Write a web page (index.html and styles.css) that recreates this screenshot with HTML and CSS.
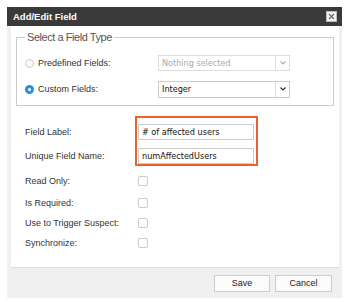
FILE: index.html
```html
<!DOCTYPE html>
<html>
<head>
<meta charset="utf-8">
<link rel="stylesheet" href="styles.css">
</head>
<body>
<div class="dialog">
  <div class="titlebar">
    <span class="title">Add/Edit Field</span>
    <span class="close"><svg width="7" height="7" viewBox="0 0 7 7"><path d="M1 1L6 6M6 1L1 6" stroke="#666" stroke-width="1.2"/></svg></span>
  </div>
  <div class="body">
    <div class="panel">
      <fieldset class="ftype">
        <legend>Select a Field Type</legend>
        <div class="trow">
          <span class="radio"></span>
          <span class="tlabel">Predefined Fields:</span>
          <span class="select disabled"><span class="sv">Nothing selected</span><span class="arr"><svg width="6" height="4" viewBox="0 0 6 4"><path d="M0.5 0.5L3 3L5.5 0.5" fill="none" stroke="#aaa" stroke-width="1.1"/></svg></span></span>
        </div>
        <div class="trow">
          <span class="radio on"></span>
          <span class="tlabel">Custom Fields:</span>
          <span class="select"><span class="sv">Integer</span><span class="arr"><svg width="6" height="4" viewBox="0 0 6 4"><path d="M0.5 0.5L3 3L5.5 0.5" fill="none" stroke="#333" stroke-width="1.2"/></svg></span></span>
        </div>
      </fieldset>
      <div class="form">
        <div class="frow tall"><span class="flabel">Field Label:</span><span class="input">#&nbsp;of affected users</span></div>
        <div class="frow tall"><span class="flabel">Unique Field Name:</span><span class="input">numAffectedUsers</span></div>
        <div class="frow first"><span class="flabel">Read Only:</span><span class="cb"></span></div>
        <div class="frow second"><span class="flabel">Is Required:</span><span class="cb"></span></div>
        <div class="frow"><span class="flabel">Use to Trigger Suspect:</span><span class="cb"></span></div>
        <div class="frow"><span class="flabel">Synchronize:</span><span class="cb"></span></div>
        <div class="highlight"></div>
      </div>
    </div>
  </div>
  <div class="footer">
    <span class="btn">Save</span>
    <span class="btn">Cancel</span>
  </div>
</div>
</body>
</html>
```
FILE: styles.css
```css
html, body { margin: 0; padding: 0; background: #fff; }
body { font-family: "Liberation Sans", Arial, sans-serif; font-size: 9px; color: #333; }
.dialog { margin: 7px 0 0 7px; width: 335px; background: #f0f0f0; }
.titlebar { height: 19px; background: #3a3a3a; display: flex; align-items: center; justify-content: space-between; padding: 0 5px 0 6px; }
.title { color: #fff; font-weight: bold; font-size: 9.5px; }
.close { background: #f4f4f4; border: 1px solid #bbb; display: flex; align-items: center; justify-content: center; box-sizing: border-box; width: 11px; height: 11px; }
.close svg { display: block; }
.body { padding: 0 3px 0 4px; }
.panel { background: #fff; height: 242px; border-bottom: 1px solid #ddd; padding: 5px 5px 0 5px; box-sizing: border-box; }
.ftype { margin: 0; border: 1px solid #ccc; padding: 7px 0 0 8px; height: 75px; box-sizing: border-box; }
.ftype legend { color: #555; font-size: 11px; letter-spacing: -0.45px; padding: 0 2px; }
.trow { display: flex; align-items: center; height: 26px; }
.radio { width: 9px; height: 9px; border-radius: 50%; border: 1px solid #ccc; box-sizing: border-box; background: #fafafa; }
.radio.on { border: none; background: #2f8be6; position: relative; }
.radio.on::after { content: ""; position: absolute; left: 3px; top: 3px; width: 3px; height: 3px; border-radius: 50%; background: #fff; }
.tlabel { margin-left: 4px; width: 120px; }
.select { display: flex; width: 132px; height: 17px; border: 1px solid #ccc; box-sizing: border-box; font-family: "DejaVu Sans Condensed", "DejaVu Sans", Tahoma, sans-serif; font-size: 9px; color: #111; }
.select.disabled { color: #aaa; border-color: #ddd; height: 16px; }
.select .sv { flex: 1; display: flex; align-items: center; padding-left: 3px; }
.select .arr { width: 13px; border-left: 1px solid #ddd; display: flex; align-items: center; justify-content: center; }
.form { padding: 14px 0 0 9px; position: relative; display: flex; flex-direction: column; }
.frow { display: flex; align-items: center; height: 20px; }
.frow.tall { height: 24px; }
.frow.first { margin-top: 3px; }
.frow.second { margin-top: 2px; }
.flabel { width: 113px; }
.input { width: 116px; height: 16px; border: 1px solid #ccc; box-sizing: border-box; display: flex; align-items: center; padding-left: 3px; font-family: "DejaVu Sans Condensed", "DejaVu Sans", Tahoma, sans-serif; font-size: 9px; color: #111; }
.cb { width: 10px; height: 10px; border: 1px solid #ccc; border-radius: 2px; box-sizing: border-box; }
.highlight { position: absolute; left: 119px; top: 10px; width: 123px; height: 50px; border: 2px solid #e8622f; box-sizing: border-box; }
.footer { height: 30px; display: flex; justify-content: flex-end; align-items: center; gap: 5px; padding-right: 10px; }
.btn { height: 17px; border: 1px solid #ccc; background: #fbfbfb; box-sizing: border-box; display: flex; align-items: center; justify-content: center; width: 56px; font-size: 9px; color: #222; }
.btn + .btn { width: 57px; }
```
